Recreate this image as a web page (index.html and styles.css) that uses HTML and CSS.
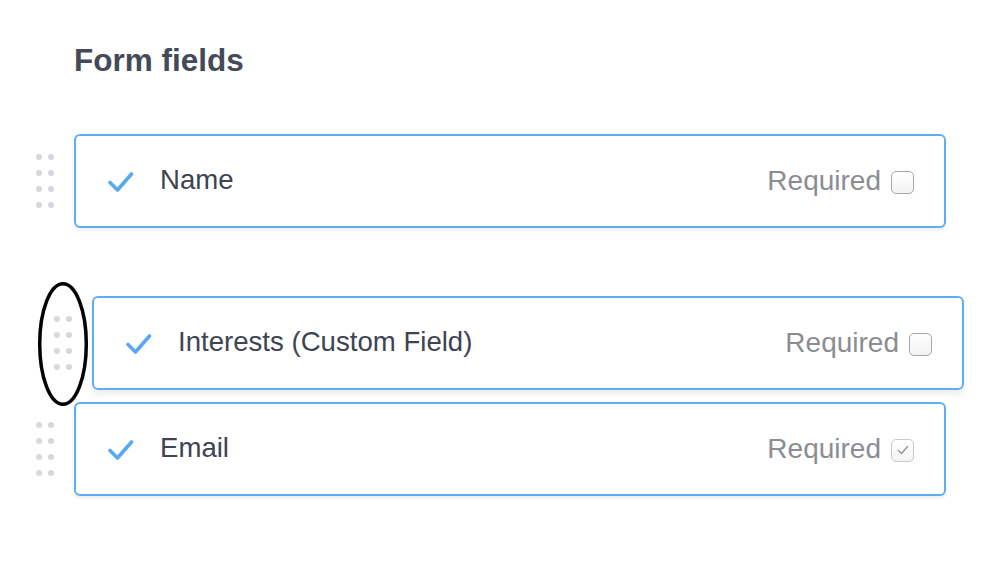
FILE: index.html
```html
<!DOCTYPE html>
<html>
<head>
<meta charset="utf-8">
<link rel="stylesheet" href="styles.css">
</head>
<body>
<div class="page">
  <h1 class="title">Form fields</h1>
  <div class="fields">
    <div class="row row-first">
      <div class="handle"><span></span><span></span><span></span><span></span><span></span><span></span><span></span><span></span></div>
      <div class="card">
        <svg class="tick" width="26" height="22" viewBox="0 0 26 22"><path d="M2 11.5 L9.5 19 L23.5 3" fill="none" stroke="#58a9f2" stroke-width="3.6" stroke-linecap="round" stroke-linejoin="round"/></svg>
        <span class="label">Name</span>
        <span class="req">Required</span>
        <span class="box"></span>
      </div>
    </div>
    <div class="row row-drag">
      <div class="handle"><span></span><span></span><span></span><span></span><span></span><span></span><span></span><span></span></div>
      <div class="card card-drag">
        <svg class="tick" width="26" height="22" viewBox="0 0 26 22"><path d="M2 11.5 L9.5 19 L23.5 3" fill="none" stroke="#58a9f2" stroke-width="3.6" stroke-linecap="round" stroke-linejoin="round"/></svg>
        <span class="label">Interests (Custom Field)</span>
        <span class="req">Required</span>
        <span class="box"></span>
      </div>
      <svg class="circle" width="56" height="130" viewBox="0 0 56 130"><ellipse cx="28" cy="65" rx="23.3" ry="60.3" fill="none" stroke="#000" stroke-width="3.5"/></svg>
    </div>
    <div class="row">
      <div class="handle"><span></span><span></span><span></span><span></span><span></span><span></span><span></span><span></span></div>
      <div class="card">
        <svg class="tick" width="26" height="22" viewBox="0 0 26 22"><path d="M2 11.5 L9.5 19 L23.5 3" fill="none" stroke="#58a9f2" stroke-width="3.6" stroke-linecap="round" stroke-linejoin="round"/></svg>
        <span class="label">Email</span>
        <span class="req">Required</span>
        <span class="box box-checked"><svg width="14" height="14" viewBox="0 0 14 14"><path d="M2.5 7.5 L5.5 10.5 L11.5 3.5" fill="none" stroke="#9a9a9a" stroke-width="1.6" stroke-linecap="round" stroke-linejoin="round"/></svg></span>
      </div>
    </div>
  </div>
</div>
</body>
</html>
```
FILE: styles.css
```css
html, body {
  margin: 0;
  padding: 0;
  background: #ffffff;
}
body {
  width: 1008px;
  height: 566px;
  overflow: hidden;
  font-family: "Liberation Sans", Arial, Helvetica, sans-serif;
}
.page {
  padding-left: 36px;
}
.title {
  margin: 44px 0 0 38px;
  font-size: 31.5px;
  line-height: 32px;
  font-weight: bold;
  color: #434a58;
}
.fields {
  margin-top: 58px;
  display: flex;
  flex-direction: column;
}
.row {
  display: flex;
  align-items: center;
  position: relative;
}
.row-first {
  margin-bottom: 68px;
}
.row-drag {
  margin-left: 18px;
  margin-bottom: 12px;
}
.handle {
  width: 38px;
  display: grid;
  grid-template-columns: 6px 6px;
  grid-auto-rows: 6px;
  column-gap: 6px;
  row-gap: 10px;
  align-content: center;
}
.handle span {
  width: 6px;
  height: 6px;
  border-radius: 50%;
  background: #d5d8df;
}
.card {
  box-sizing: border-box;
  width: 872px;
  height: 94px;
  border: 2px solid #5faef5;
  border-radius: 6px;
  background: #fff;
  box-shadow: 0 3px 3px rgba(0, 0, 0, 0.06);
  display: flex;
  align-items: center;
  padding: 0 30px 0 32px;
}
.card-drag {
  box-shadow: 0 4px 6px rgba(0, 0, 0, 0.08);
}
.tick {
  display: block;
  flex: none;
  margin-right: 26px;
  margin-top: 2px;
}
.label {
  font-size: 27.6px;
  color: #3d4452;
  flex: 1;
  margin-top: -2px;
}
.req {
  font-size: 28px;
  color: #8b8d92;
  margin-right: 10px;
}
.box {
  box-sizing: border-box;
  width: 23px;
  height: 23px;
  border: 1.5px solid #a6a6a6;
  border-radius: 5px;
  background: linear-gradient(#ffffff, #f3f3f3);
  display: flex;
  align-items: center;
  justify-content: center;
  margin-top: 2px;
}
.box-checked {
  border-color: #c8c8c8;
}
.circle {
  position: absolute;
  left: -19px;
  top: -17px;
}
```
